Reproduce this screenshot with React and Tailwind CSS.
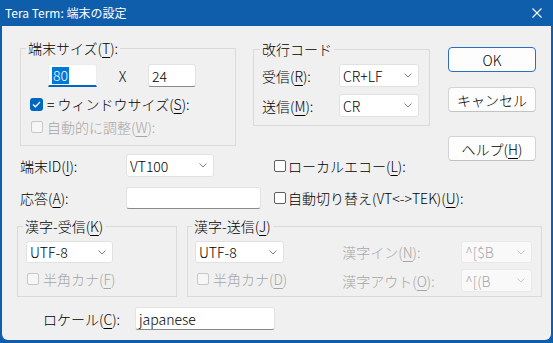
import React from 'react';

// mnemonic letter, underlined like the Windows dialog accelerators
const U = ({ children }) => (
  <span className="underline underline-offset-[3px] decoration-1">{children}</span>
);

const Chevron = ({ disabled }) => (
  <svg width="8" height="5" viewBox="0 0 8 5" className="shrink-0">
    <path d="M0.5 0.5 L4 4 L7.5 0.5" fill="none" stroke={disabled ? '#c8c8c8' : '#808080'} strokeWidth="1" />
  </svg>
);

const Select = ({ value, className = '', disabled }) => (
  <div
    className={`shrink-0 flex items-center justify-between pl-[3px] pr-[6px] border rounded-[3px] ${
      disabled ? 'bg-[#f9f9f9] border-[#e9e9e9] text-[#a6a6a6]' : 'bg-white border-[#e1e1e1] text-black'
    } ${className}`}
  >
    <span className="text-[14px] leading-[20px]">{value}</span>
    <Chevron disabled={disabled} />
  </div>
);

const Input = ({ value, className = '' }) => (
  <div className={`shrink-0 flex items-center pl-[3px] bg-white border border-[#e3e3e3] border-b-[#8a8a8a] rounded-[3px] ${className}`}>
    <span className="text-[14px] leading-[20px]">{value}</span>
  </div>
);

const Check = ({ checked, disabled, label, gap = 'ml-[3px]', className = '' }) => (
  <div className={`shrink-0 flex items-center h-[20px] ${className}`}>
    {checked ? (
      <span className="shrink-0 w-[13px] h-[13px] rounded-[3px] bg-[#0067c0] flex items-center justify-center">
        <svg width="9" height="7" viewBox="0 0 9 7">
          <path d="M1 3.5 L3.4 5.8 L8 1" fill="none" stroke="white" strokeWidth="1.3" />
        </svg>
      </span>
    ) : disabled ? (
      <span className="shrink-0 w-[12px] h-[12px] rounded-[2px] border border-[#c8c8c8] bg-[#f6f6f6]" />
    ) : (
      <span className="shrink-0 w-[12px] h-[12px] rounded-[2px] border border-[#5f5f5f] bg-white" />
    )}
    <span className={`${gap} text-[14px] leading-[20px] whitespace-nowrap ${disabled ? 'text-[#a6a6a6]' : 'text-black'}`}>
      {label}
    </span>
  </div>
);

const Btn = ({ children, primary, className = '' }) => (
  <div
    className={`w-[88px] h-[25px] flex items-center justify-center rounded-[4px] bg-[#fdfdfd] border text-[14px] leading-[20px] ${
      primary ? 'border-[#2a6fc0]' : 'border-[#d3d3d3] border-b-[#c2c2c2]'
    } ${className}`}
  >
    {children}
  </div>
);

const Group = ({ legend, legendClass, className = '', children }) => (
  <fieldset className={`shrink-0 border border-[#dadada] ${className}`}>
    <legend className={`px-[2px] text-[14px] leading-[20px] ${legendClass}`}>{legend}</legend>
    {children}
  </fieldset>
);

export default function App() {
  return (
    <div className="w-[553px] h-[343px] bg-[#0f5eab] flex flex-col font-['Noto_Sans_CJK_JP','Noto_Sans',sans-serif] font-light text-black select-none">
      {/* title bar */}
      <div className="h-[26px] flex items-center justify-between pl-[5px] pr-[11px] text-white">
        <span className="text-[12px] leading-[16px] font-normal">Tera Term: 端末の設定</span>
        <svg width="10" height="10" viewBox="0 0 10 10">
          <path d="M0.5 0.5 L9.5 9.5 M9.5 0.5 L0.5 9.5" stroke="white" strokeWidth="1.1" />
        </svg>
      </div>

      {/* client area */}
      <div className="ml-[2px] w-[549px] h-[314px] bg-[#f0f0f0] rounded-b-[6px] flex flex-col">
        <div className="mt-[12px] flex items-start">
          <div className="ml-[18px] w-[420px] shrink-0 flex flex-col">
            <div className="flex items-start">
              <Group legend={<>端末サイズ(<U>T</U>):</>} legendClass="ml-[5px]" className="w-[216px] h-[108px]">
                <div className="mt-[6px] flex items-center">
                  <div className="shrink-0 ml-[27px] w-[49px] h-[23px] bg-white border-x border-t border-[#ececec] border-b-2 border-b-[#0067c0] rounded-t-[3px] flex items-center pl-[3px]">
                    <span className="bg-[#0078d7] text-white text-[14px] leading-[17px] px-[1px]">80</span>
                  </div>
                  <span className="shrink-0 w-[51px] text-center text-[14px] leading-[20px]">X</span>
                  <Input value="24" className="w-[48px] h-[23px]" />
                </div>
                <Check checked label={<>= ウィンドウサイズ(<U>S</U>):</>} gap="ml-[4px]" className="mt-[7px] ml-[9px]" />
                <Check disabled label={<>自動的に調整(<U>W</U>):</>} gap="ml-[4px]" className="mt-[3px] ml-[10px]" />
              </Group>

              <Group legend="改行コード" legendClass="ml-[6px]" className="ml-[17px] mt-[1px] w-[177px] h-[87px]">
                <div className="mt-[5px] flex items-center h-[23px]">
                  <span className="shrink-0 ml-[8px] w-[77px] text-[14px] leading-[20px]">受信(<U>R</U>):</span>
                  <Select value="CR+LF" className="w-[80px] h-[23px]" />
                </div>
                <div className="mt-[7px] flex items-center h-[23px]">
                  <span className="shrink-0 ml-[8px] w-[77px] text-[14px] leading-[20px]">送信(<U>M</U>):</span>
                  <Select value="CR" className="w-[80px] h-[23px]" />
                </div>
              </Group>
            </div>

            <div className="mt-[8px] flex items-center h-[23px]">
              <span className="shrink-0 w-[106px] text-[14px] leading-[20px]">端末ID(<U>I</U>):</span>
              <Select value="VT100" className="w-[88px] h-[23px]" />
              <Check label={<>ローカルエコー(<U>L</U>):</>} gap="ml-[2px]" className="ml-[60px]" />
            </div>

            <div className="mt-[10px] flex items-center h-[22px]">
              <span className="shrink-0 w-[106px] text-[14px] leading-[20px]">応答(<U>A</U>):</span>
              <Input value="" className="w-[135px] h-[22px]" />
              <Check label={<>自動切り替え(VT&lt;-&gt;TEK)(<U>U</U>):</>} gap="ml-[2px]" className="ml-[13px]" />
            </div>
          </div>

          <div className="ml-[8px] mt-[9px] shrink-0 flex flex-col">
            <Btn primary>OK</Btn>
            <Btn className="mt-[15px]">キャンセル</Btn>
            <Btn className="mt-[24px]">ヘルプ(<U>H</U>)</Btn>
          </div>
        </div>

        {/* kanji groups */}
        <div className="mt-[7px] ml-[15px] flex items-start">
          <Group legend={<>漢字-受信(<U>K</U>)</>} legendClass="ml-[5px]" className="w-[160px] h-[81px]">
            <Select value="UTF-8" className="mt-[5px] ml-[8px] w-[87px] h-[22px]" />
            <Check disabled label={<>半角カナ(<U>F</U>)</>} gap="ml-[4px]" className="mt-[6px] ml-[9px]" />
          </Group>

          <Group legend={<>漢字-送信(<U>J</U>)</>} legendClass="ml-[4px]" className="ml-[10px] w-[355px] h-[81px]">
            <div className="flex items-start">
              <div className="ml-[7px] flex flex-col">
                <Select value="UTF-8" className="mt-[5px] w-[89px] h-[22px]" />
                <Check disabled label={<>半角カナ(<U>D</U>)</>} gap="ml-[4px]" className="mt-[6px] ml-[2px]" />
              </div>
              <div className="ml-[55px] flex flex-col">
                <div className="mt-[5px] flex items-center h-[22px]">
                  <span className="shrink-0 w-[119px] text-[14px] leading-[20px] text-[#a6a6a6]">漢字イン(<U>N</U>):</span>
                  <Select disabled value="^[$B" className="w-[71px] h-[22px]" />
                </div>
                <div className="mt-[6px] flex items-center h-[23px]">
                  <span className="shrink-0 w-[119px] text-[14px] leading-[20px] text-[#a6a6a6]">漢字アウト(<U>O</U>):</span>
                  <Select disabled value="^[(B" className="w-[71px] h-[23px]" />
                </div>
              </div>
            </div>
          </Group>
        </div>

        {/* locale */}
        <div className="mt-[10px] ml-[41px] flex items-center h-[23px]">
          <span className="shrink-0 w-[92px] text-[14px] leading-[20px]">ロケール(<U>C</U>):</span>
          <Input value="japanese" className="w-[140px] h-[23px]" />
        </div>
      </div>
    </div>
  );
}
